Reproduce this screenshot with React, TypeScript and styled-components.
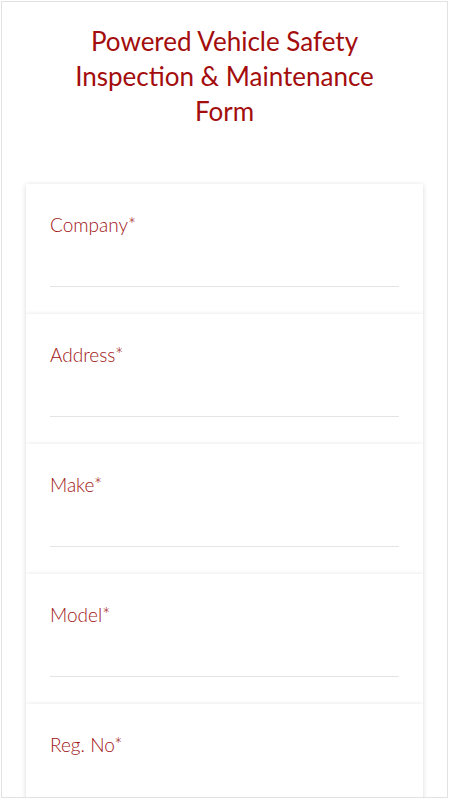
import React from "react";
import styled, { createGlobalStyle } from "styled-components";

const Global = createGlobalStyle`
  html, body { margin: 0; padding: 0; background: #ffffff; }
  body { font-family: Lato, "Liberation Sans", sans-serif; overflow: hidden; }
`;

const Frame = styled.div`
  box-sizing: border-box;
  margin: 1px;
  width: 447px;
  height: 797px;
  border: 1px solid #e2e2e2;
  overflow: hidden;
  display: flex;
  flex-direction: column;
  align-items: center;
`;

const Title = styled.h1`
  margin: 22px 0 0;
  width: 340px;
  text-align: center;
  font-family: Lato, "Liberation Sans", sans-serif;
  font-weight: 400;
  font-size: 26px;
  line-height: 35px;
  color: #a30d0d;
`;

const Cards = styled.div`
  margin-top: 55px;
  width: 397px;
  display: flex;
  flex-direction: column;
`;

const Card = styled.div`
  box-sizing: border-box;
  height: 130px;
  background: #ffffff;
  padding: 29px 24px 0 24px;
  box-shadow: 0 1px 5px rgba(0, 0, 0, 0.16);
  display: flex;
  flex-direction: column;
`;

const Label = styled.label`
  font-family: Lato, "Liberation Sans", sans-serif;
  font-weight: 300;
  font-size: 19px;
  line-height: 24px;
  color: #a01414;
`;

const Input = styled.div`
  margin-top: 49px;
  height: 1px;
  background: #e4e4e4;
`;

const fields = ["Company*", "Address*", "Make*", "Model*", "Reg. No*"];

export default function App() {
  return (
    <>
      <Global />
      <Frame>
        <Title>Powered Vehicle Safety Inspection &amp; Maintenance Form</Title>
        <Cards>
          {fields.map((f) => (
            <Card key={f}>
              <Label>{f}</Label>
              <Input />
            </Card>
          ))}
        </Cards>
      </Frame>
    </>
  );
}
